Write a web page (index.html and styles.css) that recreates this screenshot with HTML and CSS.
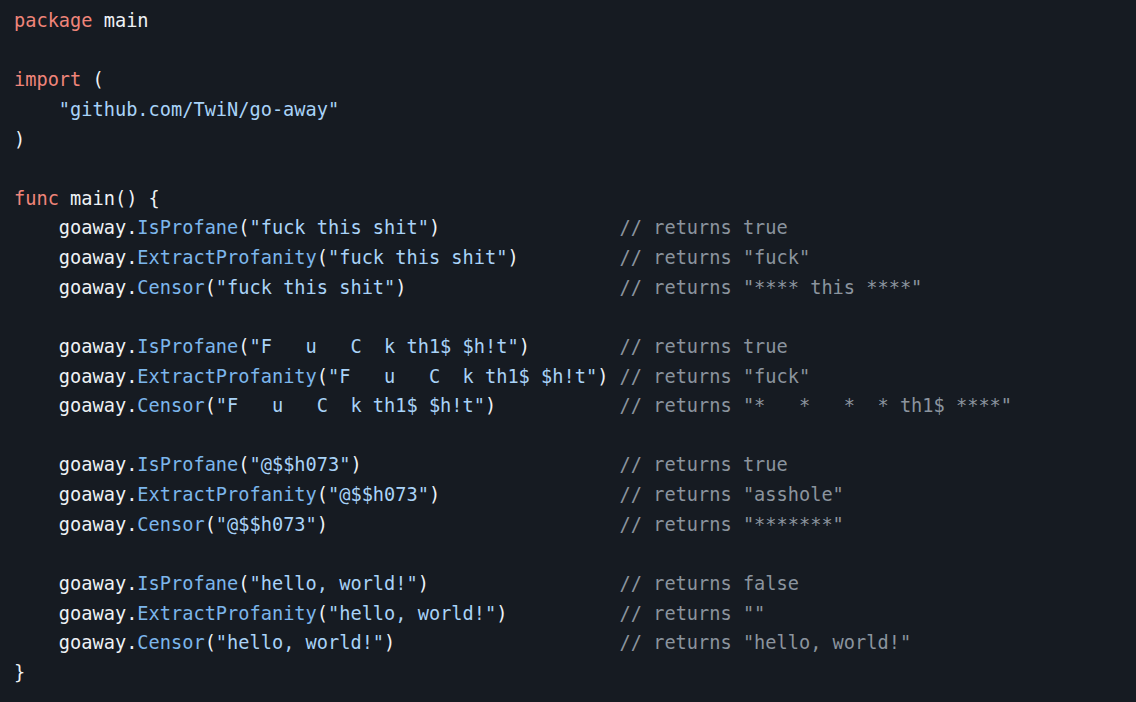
FILE: index.html
```html
<!DOCTYPE html>
<html lang="en">
<head>
<meta charset="utf-8">
<title>go-away example</title>
<link rel="stylesheet" href="styles.css">
</head>
<body>
<div class="code-block">
<pre class="code"><span class="k">package</span> <span class="n">main</span>

<span class="k">import</span> <span class="n">(</span>
    <span class="s">"github.com/TwiN/go-away"</span>
<span class="n">)</span>

<span class="k">func</span> <span class="n">main() {</span>
    <span class="n">goaway.</span><span class="f">IsProfane</span><span class="n">(</span><span class="s">"fuck this shit"</span><span class="n">)</span>                <span class="c">// returns true</span>
    <span class="n">goaway.</span><span class="f">ExtractProfanity</span><span class="n">(</span><span class="s">"fuck this shit"</span><span class="n">)</span>         <span class="c">// returns "fuck"</span>
    <span class="n">goaway.</span><span class="f">Censor</span><span class="n">(</span><span class="s">"fuck this shit"</span><span class="n">)</span>                   <span class="c">// returns "**** this ****"</span>

    <span class="n">goaway.</span><span class="f">IsProfane</span><span class="n">(</span><span class="s">"F   u   C  k th1$ $h!t"</span><span class="n">)</span>        <span class="c">// returns true</span>
    <span class="n">goaway.</span><span class="f">ExtractProfanity</span><span class="n">(</span><span class="s">"F   u   C  k th1$ $h!t"</span><span class="n">)</span> <span class="c">// returns "fuck"</span>
    <span class="n">goaway.</span><span class="f">Censor</span><span class="n">(</span><span class="s">"F   u   C  k th1$ $h!t"</span><span class="n">)</span>           <span class="c">// returns "*   *   *  * th1$ ****"</span>

    <span class="n">goaway.</span><span class="f">IsProfane</span><span class="n">(</span><span class="s">"@$$h073"</span><span class="n">)</span>                       <span class="c">// returns true</span>
    <span class="n">goaway.</span><span class="f">ExtractProfanity</span><span class="n">(</span><span class="s">"@$$h073"</span><span class="n">)</span>                <span class="c">// returns "asshole"</span>
    <span class="n">goaway.</span><span class="f">Censor</span><span class="n">(</span><span class="s">"@$$h073"</span><span class="n">)</span>                          <span class="c">// returns "*******"</span>

    <span class="n">goaway.</span><span class="f">IsProfane</span><span class="n">(</span><span class="s">"hello, world!"</span><span class="n">)</span>                 <span class="c">// returns false</span>
    <span class="n">goaway.</span><span class="f">ExtractProfanity</span><span class="n">(</span><span class="s">"hello, world!"</span><span class="n">)</span>          <span class="c">// returns ""</span>
    <span class="n">goaway.</span><span class="f">Censor</span><span class="n">(</span><span class="s">"hello, world!"</span><span class="n">)</span>                    <span class="c">// returns "hello, world!"</span>
<span class="n">}</span></pre>
</div>
</body>
</html>
```

FILE: styles.css
```css
html, body {
  margin: 0;
  padding: 0;
  background: #161b22;
  height: 100%;
}

.code-block {
  background: #161b22;
  min-height: 100%;
  padding: 6px 14px 0 14px;
  box-sizing: border-box;
}

.code {
  margin: 0;
  font-family: "DejaVu Sans Mono", "Liberation Mono", monospace;
  font-size: 18.64px;
  line-height: 29.62px;
  color: #e6edf3;
  white-space: pre;
}

.k { color: #f0857a; }
.n { color: #eef2f6; }
.f { color: #7cb6ec; }
.s { color: #a9d3f8; }
.c { color: #8b949e; }
```
